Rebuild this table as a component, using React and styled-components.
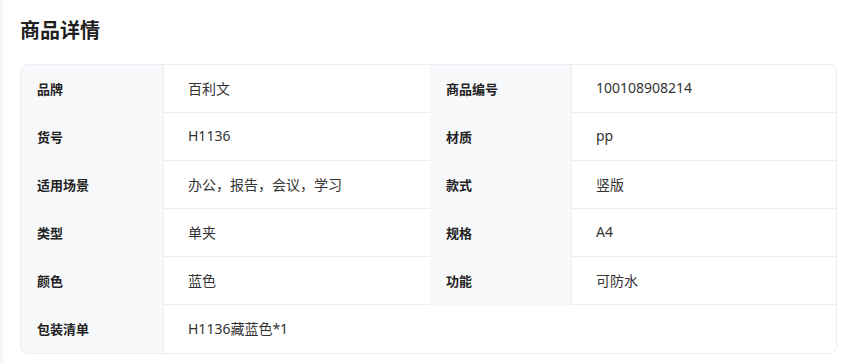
import React from 'react'
import styled, { createGlobalStyle } from 'styled-components'

const GlobalStyle = createGlobalStyle`
  html, body {
    margin: 0;
    padding: 0;
    background: #ffffff;
  }
  body {
    font-family: "Noto Sans", "Noto Sans CJK SC", sans-serif;
    color: #333333;
  }
`

const Page = styled.div`
  min-height: 362px;
  box-sizing: border-box;
  border-left: 3px solid #f3f5f8;
  padding: 17px 4px 0 17px;
`

const Title = styled.h2`
  margin: 0 0 19px;
  font-size: 20px;
  line-height: 28px;
  font-weight: 700;
  color: #1f1f1f;
`

const Card = styled.div`
  display: grid;
  grid-template-columns: 143px 266px 142px 1fr;
  border: 1px solid #ebeef5;
  border-radius: 8px;
  overflow: hidden;
`

const Label = styled.div`
  box-sizing: border-box;
  height: 48px;
  display: flex;
  align-items: center;
  padding: 0 16px 2px;
  background: #f7f8fa;
  border-right: 1px solid #ebeef5;
  font-size: 13px;
  font-weight: 700;
  color: #222222;
`

const Value = styled.div`
  box-sizing: border-box;
  height: 48px;
  display: flex;
  align-items: center;
  padding: 0 24px 2px;
  font-size: 14px;
  color: #333333;
  border-bottom: ${p => (p.$last ? 'none' : '1px solid #ebeef5')};
  grid-column: ${p => (p.$wide ? 'span 3' : 'auto')};
`

const rows = [
  ['品牌', '百利文', '商品编号', '100108908214'],
  ['货号', 'H1136', '材质', 'pp'],
  ['适用场景', '办公，报告，会议，学习', '款式', '竖版'],
  ['类型', '单夹', '规格', 'A4'],
  ['颜色', '蓝色', '功能', '可防水'],
]

export default function App() {
  return (
    <>
      <GlobalStyle />
      <Page>
        <Title>商品详情</Title>
        <Card>
          {rows.map(([l1, v1, l2, v2]) => (
            <React.Fragment key={l1}>
              <Label>{l1}</Label>
              <Value>{v1}</Value>
              <Label>{l2}</Label>
              <Value>{v2}</Value>
            </React.Fragment>
          ))}
          <Label>包装清单</Label>
          <Value $wide $last>H1136藏蓝色*1</Value>
        </Card>
      </Page>
    </>
  )
}
